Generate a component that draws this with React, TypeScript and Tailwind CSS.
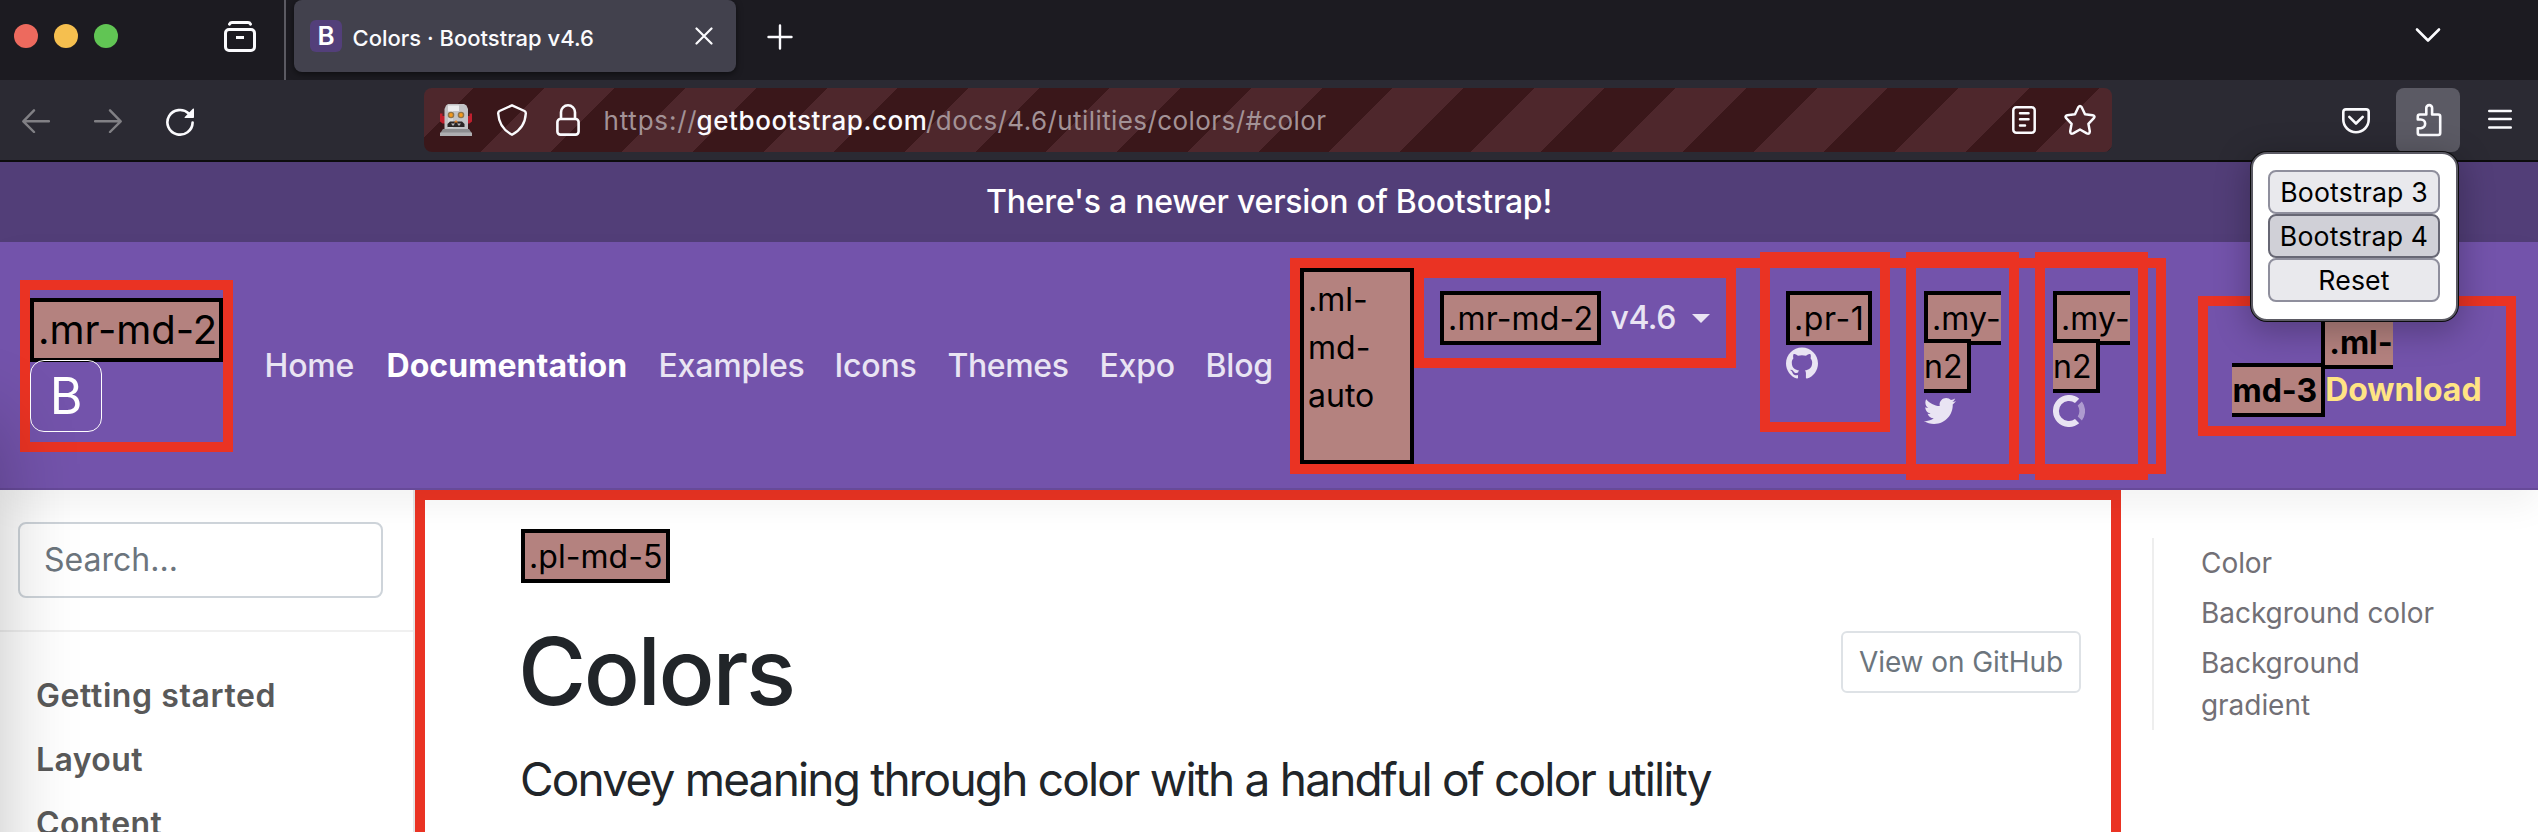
import React from "react";
import { FaTwitter } from "react-icons/fa";

const UI_FONT = "font-['Inter','Liberation_Sans',sans-serif]";

function Tag({ children }: { children: React.ReactNode }) {
  return (
    <span className="border-4 border-black bg-[#b4827f] px-1 py-[3.5px] text-black">{children}</span>
  );
}

function TabStrip() {
  return (
    <div className="flex h-20 shrink-0 items-start bg-[#1c1b21]">
      <div className="flex h-20 w-[286px] shrink-0 border-r-2 border-[#5b5a62]">
        <div className="flex gap-4 pl-3.5 pt-6">
          <span className="size-6 rounded-full bg-[#ed6a5e]" />
          <span className="size-6 rounded-full bg-[#f5bf4f]" />
          <span className="size-6 rounded-full bg-[#61c554]" />
        </div>
        <svg className="ml-[104px] mt-5 size-9" viewBox="0 0 36 36" fill="none" stroke="#fbfbfe" strokeWidth="3" strokeLinecap="round">
          <path d="M7.5 4.2Q8.3 2.6 10 2.6H26Q27.700 2.6 28.500 4.200" />
          <rect x="3.500" y="9.500" width="29" height="21" rx="3.500" />
          <path d="M14 17.500H22" strokeLinecap="butt" />
        </svg>
      </div>
      <div className="ml-2 flex h-[72px] w-[442px] items-start rounded-lg bg-[#42414d] shadow-[0_2px_6px_rgba(0,0,0,0.5)]">
        <span className="ml-4 mt-5 flex size-8 items-center justify-center rounded-md bg-[#533f7a] text-[26px] leading-8 font-semibold text-white">
          B
        </span>
        <span className="ml-[10.500px] mt-[21.500px] w-[340px] text-[22px] leading-8 font-medium whitespace-nowrap text-[#fbfbfe]">
          Colors · Bootstrap v4.6
        </span>
        <svg className="mt-[27px] ml-[2px] size-[18px]" viewBox="0 0 18 18" fill="none" stroke="#fbfbfe" strokeWidth="2.200" strokeLinecap="round">
          <path d="M1.500 1.500 16.500 16.500M16.500 1.500 1.500 16.500" />
        </svg>
      </div>
      <svg className="ml-[31px] mt-6 size-[26px]" viewBox="0 0 26 26" fill="none" stroke="#fbfbfe" strokeWidth="2.400" strokeLinecap="round">
        <path d="M13 1.500V24.500M1.500 13H24.500" />
      </svg>
      <svg className="ml-auto mr-[97px] mt-[27px] h-4 w-[26px]" viewBox="0 0 26 16" fill="none" stroke="#fbfbfe" strokeWidth="2.600" strokeLinecap="round" strokeLinejoin="round">
        <path d="M2 2.500 13 13.500 24 2.500" />
      </svg>
    </div>
  );
}

function Robot() {
  return (
    <svg className="size-8" viewBox="0 0 32 32">
      <path d="M0 9.500H2.500V12H5V19.500H2.500L0 17.500ZM32 9.500H29.500V12H27V19.500H29.500L32 17.500Z" fill="#c01f2e" />
      <path d="M6 1.500 8 0H24L26.500 1.500 28 5V25H4.500V5Z" fill="#c3c3c6" />
      <path d="M8 1.500H19V7H8Z" fill="#ececee" />
      <path d="M8 7H13V24H8Z" fill="#d6d6d9" />
      <circle cx="11" cy="11" r="3.300" fill="#8f7348" />
      <circle cx="21" cy="11" r="3.300" fill="#8f7348" />
      <circle cx="11" cy="11" r="1.900" fill="#f59a1c" />
      <circle cx="21" cy="11" r="1.900" fill="#f59a1c" />
      <path d="M7.500 23V20L10 17.500H22L24.500 20V23Z" fill="#2a2526" />
      <path d="M11 19.500H15L13 22ZM17 19.500H21L19 22Z" fill="#b9b9bc" />
      <path d="M14 18.500 16 16 18 18.500Z" fill="#e8842a" />
      <path d="M3 25H29L31 28V29H1V28Z" fill="#8c8c8f" />
      <path d="M0 28.500H32V32H0Z" fill="#aeaeb1" />
    </svg>
  );
}

function Toolbar() {
  return (
    <div className="flex h-[82px] shrink-0 items-start border-b-2 border-[#0c0c0d] bg-[#2b2a33]">
      <svg className="ml-[22px] mt-[29px] h-6 w-7" viewBox="0 0 28 24" fill="none" stroke="#818085" strokeWidth="2.400" strokeLinecap="round" strokeLinejoin="round">
        <path d="M27 12.300H1.500M12 1.300 1.300 12.300 12 23" />
      </svg>
      <svg className="ml-11 mt-[29px] h-6 w-7" viewBox="0 0 28 24" fill="none" stroke="#818085" strokeWidth="2.400" strokeLinecap="round" strokeLinejoin="round">
        <path d="M1 12.300H26.500M16 1.300 26.700 12.300 16 23" />
      </svg>
      <svg className="ml-11 mt-7 size-7" viewBox="0 0 28 28" fill="none" stroke="#fbfbfe" strokeWidth="2.600" strokeLinecap="round">
        <path d="M26.600 14.600A12.600 12.300 0 1 1 22.800 5.500" />
        <path d="M28 .8V9.200Q28 10 27.200 10H19Q18 9.800 18.800 9L26.800 .8Q27.500 .2 28 .8Z" fill="#fbfbfe" stroke="none" />
      </svg>
      <div className="ml-[230px] mt-2 flex h-16 w-[1688px] items-start rounded-lg bg-[repeating-linear-gradient(135deg,#4e272c_0_35px,#3a171a_35px_85px,#4e272c_85px_100px)]">
        <div className="ml-4 mt-4">
          <Robot />
        </div>
        <svg className="ml-[25px] mt-4 h-8 w-[30px]" viewBox="0 0 30 32" fill="none" stroke="#fbfbfe" strokeWidth="2.400" strokeLinejoin="round">
          <path d="M15 1.300 27.500 7Q28.900 7.800 28.800 9.500 28 24 15 30.700 2 24 1.200 9.500 1.100 7.800 2.500 7Z" />
        </svg>
        <svg className="ml-[29px] mt-4 h-8 w-6" viewBox="0 0 24 32" fill="none" stroke="#fbfbfe" strokeWidth="2.600">
          <rect x="1.400" y="15" width="21.200" height="15.600" rx="3" />
          <path d="M5 15V8.300A7 7 0 0 1 19 8.300V15" />
        </svg>
        <div className="ml-[23.500px] mt-[13px] flex w-[1408px] shrink-0 text-[26px] leading-[40px] whitespace-nowrap text-[#a39296]">
          <span className="w-[93px] tracking-[0.800px]">https://</span>
          <span className="w-[229.500px] font-medium tracking-[0.580px] text-[#fbfbfe]">getbootstrap.com</span>
          <span className="tracking-[0.420px]">/docs/4.6/utilities/colors/#color</span>
        </div>
        <svg className="mt-[18px] h-7 w-6 shrink-0" viewBox="0 0 24 28" fill="none" stroke="#fbfbfe" strokeWidth="2.500" strokeLinecap="round">
          <rect x="1.300" y="1.300" width="21.400" height="25.400" rx="3" />
          <path d="M8 7.200H16.500M8 13.300H16.500M8 19.400H13" />
        </svg>
        <svg className="ml-7 mt-4 size-8 shrink-0" viewBox="0 0 32 32" fill="none" stroke="#fbfbfe" strokeWidth="2.500" strokeLinejoin="round">
          <path d="M14.300 3.200Q16 .8 17.700 3.200L21 10.200 28.700 11.200Q31.600 12 29.800 14.200L24.400 19.800 25.800 27.300Q25.700 30.500 22.800 29.400L16 25.500 9.200 29.400Q6.300 30.500 6.200 27.300L7.600 19.800 2.200 14.200Q.4 12 3.300 11.200L11 10.200Z" />
        </svg>
      </div>
      <svg className="ml-auto mt-7 h-[26px] w-7" viewBox="0 0 28 26" fill="none" stroke="#fbfbfe" strokeWidth="2.600" strokeLinecap="round" strokeLinejoin="round">
        <path d="M4 1.400H24Q26.700 1.400 26.700 4V11.500A12.700 12.700 0 0 1 1.300 11.500V4Q1.300 1.400 4 1.400Z" />
        <path d="M7.300 8.800 14 15.500 20.700 8.800" />
      </svg>
      <div className="ml-[26px] mt-2 flex size-16 items-start rounded-lg bg-[#5b5a64] pl-[18px] pt-3.5">
        <svg className="h-9 w-[30px]" viewBox="0 0 30 36" fill="none" stroke="#fbfbfe" strokeWidth="2.600" strokeLinejoin="round">
          <path d="M3.800 17.500V14.500a2 2 0 0 1 2-2H12.300V6a2.900 2.900 0 0 1 5.800 0V12.500H24.200a2 2 0 0 1 2 2V31a2 2 0 0 1-2 2H5.800a2 2 0 0 1-2-2V26.200H6.800a4.300 4.300 0 0 0 0-8.700Z" />
        </svg>
      </div>
      <svg className="ml-7 mr-[26px] mt-[29px] h-5 w-6" viewBox="0 0 24 20" fill="none" stroke="#fbfbfe" strokeWidth="2.400" strokeLinecap="round">
        <path d="M1.200 2H22.800M1.200 10H22.800M1.200 18.500H22.800" />
      </svg>
    </div>
  );
}

function ExtensionPopup() {
  return (
    <div className="absolute left-[2251px] top-[152px] z-30 flex h-[169px] w-[207px] flex-col rounded-2xl border-2 border-[#5b5a64] bg-white px-[15px] pt-4 text-[26.660px] leading-[40px] tracking-[0.150px] text-black shadow-[0_0_0_1px_#0c0c0d,0_8px_32px_4px_rgba(0,0,0,0.250)]">
      <button className="h-11 w-[172px] rounded-lg border-2 border-[#8f8f9d] bg-[#e9e9ed] whitespace-nowrap">Bootstrap 3</button>
      <button className="h-11 w-[172px] rounded-lg border-2 border-[#676774] bg-[#d0d0d7] whitespace-nowrap">Bootstrap 4</button>
      <button className="h-11 w-[172px] rounded-lg border-2 border-[#8f8f9d] bg-[#e9e9ed] whitespace-nowrap">Reset</button>
    </div>
  );
}

function SiteNav() {
  return (
    <header className="relative z-10 flex h-[248px] shrink-0 items-center bg-[#7353ab] text-[32px] leading-[48px] text-[#e9e4f3] shadow-[0_16px_32px_rgba(0,0,0,0.050),inset_0_-2px_0_rgba(0,0,0,0.100)]">
      <a className="ml-5 flex h-[172px] w-[213px] shrink-0 flex-col border-[10px] border-[#ea3323] pt-2">
        <span className="flex h-16 w-[193px] items-center whitespace-nowrap border-4 border-black bg-[#b4827f] pl-[4px] text-[40px] leading-[56px] tracking-[-0.050px] text-black">
          .mr-md-2
        </span>
        <span className="relative -mt-0.5 flex h-[72px] w-[72px] items-center justify-center rounded-[14px] border border-white text-[50px] leading-none text-white">
          B
        </span>
      </a>
      <nav className="ml-[31.500px] flex w-[1025.500px] shrink-0 font-medium tracking-[-0.180px] whitespace-nowrap">
        <a className="w-[122px]">Home</a>
        <a className="w-[272px] font-bold tracking-[0.050px] text-white">Documentation</a>
        <a className="w-[176px]">Examples</a>
        <a className="w-[113px]">Icons</a>
        <a className="w-[152px] tracking-[-0.400px]">Themes</a>
        <a className="w-[106px]">Expo</a>
        <a>Blog</a>
      </nav>
      <ul className="flex h-[216px] w-[876px] shrink-0 items-start border-[10px] border-[#ea3323]">
        <li className="h-[196px] w-[114px] shrink-0 border-4 border-black bg-[#b4827f] p-1 text-black">.ml-<br />md-<br />auto</li>
        <li className="flex h-[100px] w-[322px] shrink-0 items-center whitespace-nowrap border-[10px] border-[#ea3323] px-4">
          <span className="w-[170.500px] tracking-[0.200px]">
            <Tag>.mr-md-2</Tag>
          </span>
          <span className="w-[81.500px] font-medium tracking-[-0.500px]">v4.6</span>
          <svg className="h-[9px] w-[18px]" viewBox="0 0 18 9" fill="#e9e4f3">
            <path d="M0 0H18L9 9Z" />
          </svg>
        </li>
        <li className="-mt-4 ml-6 h-[180px] w-[130px] shrink-0 border-[10px] border-[#ea3323] pl-4 pt-8">
          <div className="tracking-[0.600px] whitespace-nowrap">
            <Tag>.pr-1</Tag>
          </div>
          <svg className="mt-[5px] size-8" viewBox="0 0 24 24" fill="currentColor">
            <path d="M12 .297c-6.630 0-12 5.373-12 12 0 5.303 3.438 9.800 8.205 11.385.6.113.820-.258.820-.577 0-.285-.010-1.040-.015-2.040-3.338.724-4.042-1.610-4.042-1.610C4.422 18.070 3.633 17.700 3.633 17.700c-1.087-.744.084-.729.084-.729 1.205.084 1.838 1.236 1.838 1.236 1.070 1.835 2.809 1.305 3.495.998.108-.776.417-1.305.760-1.605-2.665-.300-5.466-1.332-5.466-5.930 0-1.310.465-2.380 1.235-3.220-.135-.303-.540-1.523.105-3.176 0 0 1.005-.322 3.300 1.230.960-.267 1.980-.399 3-.405 1.020.006 2.040.138 3 .405 2.280-1.552 3.285-1.230 3.285-1.230.645 1.653.240 2.873.120 3.176.765.840 1.230 1.910 1.230 3.220 0 4.610-2.805 5.625-5.475 5.920.420.360.810 1.096.810 2.220 0 1.606-.015 2.896-.015 3.286 0 .315.210.690.825.570C20.565 22.092 24 17.592 24 12.297c0-6.627-5.373-12-12-12" />
          </svg>
        </li>
        <li className="-mt-4 ml-4 h-[228px] w-[113px] shrink-0 border-[10px] border-[#ea3323] pl-2 pt-8">
          <div className="tracking-[0.150px] whitespace-nowrap">
            <Tag>.my-<br />n2</Tag>
          </div>
          <FaTwitter className="mt-[5px] size-8" />
        </li>
        <li className="-mt-4 ml-4 h-[228px] w-[113px] shrink-0 border-[10px] border-[#ea3323] pl-2 pt-8">
          <div className="tracking-[0.150px] whitespace-nowrap">
            <Tag>.my-<br />n2</Tag>
          </div>
          <svg className="mt-[5px] size-8" viewBox="0 0 32 32" fill="currentColor">
            <path d="M26.200 3.700A16 16 0 1 0 26.200 28.300L22 24.100A10.100 10.100 0 1 1 22 7.900Z" />
            <path d="M28.900 6.400A16 16 0 0 1 28.900 25.600L24.700 21.400A10.100 10.100 0 0 0 24.700 10.600Z" opacity="0.500" />
          </svg>
        </li>
      </ul>
      <a className="ml-8 h-[140px] w-[318px] shrink-0 border-[10px] border-[#ea3323] py-3 text-center font-bold tracking-[-0.050px] whitespace-nowrap text-[#ffe484]">
        <Tag>.ml-<br />md-3</Tag>Download
      </a>
    </header>
  );
}

function PageBody() {
  return (
    <div className="flex h-[342px] shrink-0 bg-white">
      <aside className="w-[415px] shrink-0 border-r-2 border-[#e6e6e6]">
        <div className="flex h-[142px] border-b-2 border-[#f0f0f0] pl-[18px] pt-8">
          <div className="h-[76px] w-[365px] rounded-lg border-2 border-[#ced4da] bg-white pl-6 text-[32px] leading-[72px] text-[#6c757d]">
            Search...
          </div>
        </div>
        <div className="flex flex-col pl-9 pt-8 text-[32px] leading-[64px] font-semibold text-[#595959]">
          <span className="h-16 tracking-[0.600px]">Getting started</span>
          <span className="h-16 tracking-[0.400px]">Layout</span>
          <span className="h-16 tracking-[0.400px]">Content</span>
        </div>
      </aside>
      <main className="h-[380px] w-[1706px] shrink-0 border-[10px] border-[#ea3323] pl-24 pr-[30px] pt-8 text-[#212529]">
        <div className="h-12 text-[32px] leading-[47px] tracking-[0.050px]">
          <Tag>.pl-md-5</Tag>
        </div>
        <div className="flex justify-between">
          <h1 className="-ml-[3px] mt-[33px] text-[93px] leading-[116px] font-medium tracking-[-2.400px]">Colors</h1>
          <a className="mt-[51px] h-[62px] w-[240px] rounded-md border-2 border-[#dee2e6] text-center text-[28px] leading-[58px] tracking-[-0.085px] text-[#6c757d]">
            View on GitHub
          </a>
        </div>
        <p className="-ml-px mt-[14px] text-[46px] leading-[72px] tracking-[-1.810px] whitespace-nowrap">
          Convey meaning through color with a handful of color utility
        </p>
      </main>
      <nav className="ml-[30.500px] mt-12 h-48 border-l-2 border-[#eeeeee] pl-[47.500px] text-[28px] leading-[42px] tracking-[-0.050px] text-[#727076]">
        <div className="py-1">Color</div>
        <div className="py-1">Background color</div>
        <div className="py-1">Background<br />gradient</div>
      </nav>
    </div>
  );
}

export default function App() {
  return (
    <div className={`${UI_FONT} relative flex h-[832px] w-full flex-col overflow-hidden bg-white`}>
      <TabStrip />
      <Toolbar />
      <div className="h-20 shrink-0 bg-[#523e78] text-center text-[32px] leading-[80px] font-medium tracking-[-0.230px] text-white">
        There's a newer version of Bootstrap!
      </div>
      <SiteNav />
      <PageBody />
      <ExtensionPopup />
      <div className="pointer-events-none absolute -left-[200px] top-[420px] z-20 h-[700px] w-[200px] shadow-[0_0_80px_rgba(0,0,0,0.240)]" />
    </div>
  );
}
